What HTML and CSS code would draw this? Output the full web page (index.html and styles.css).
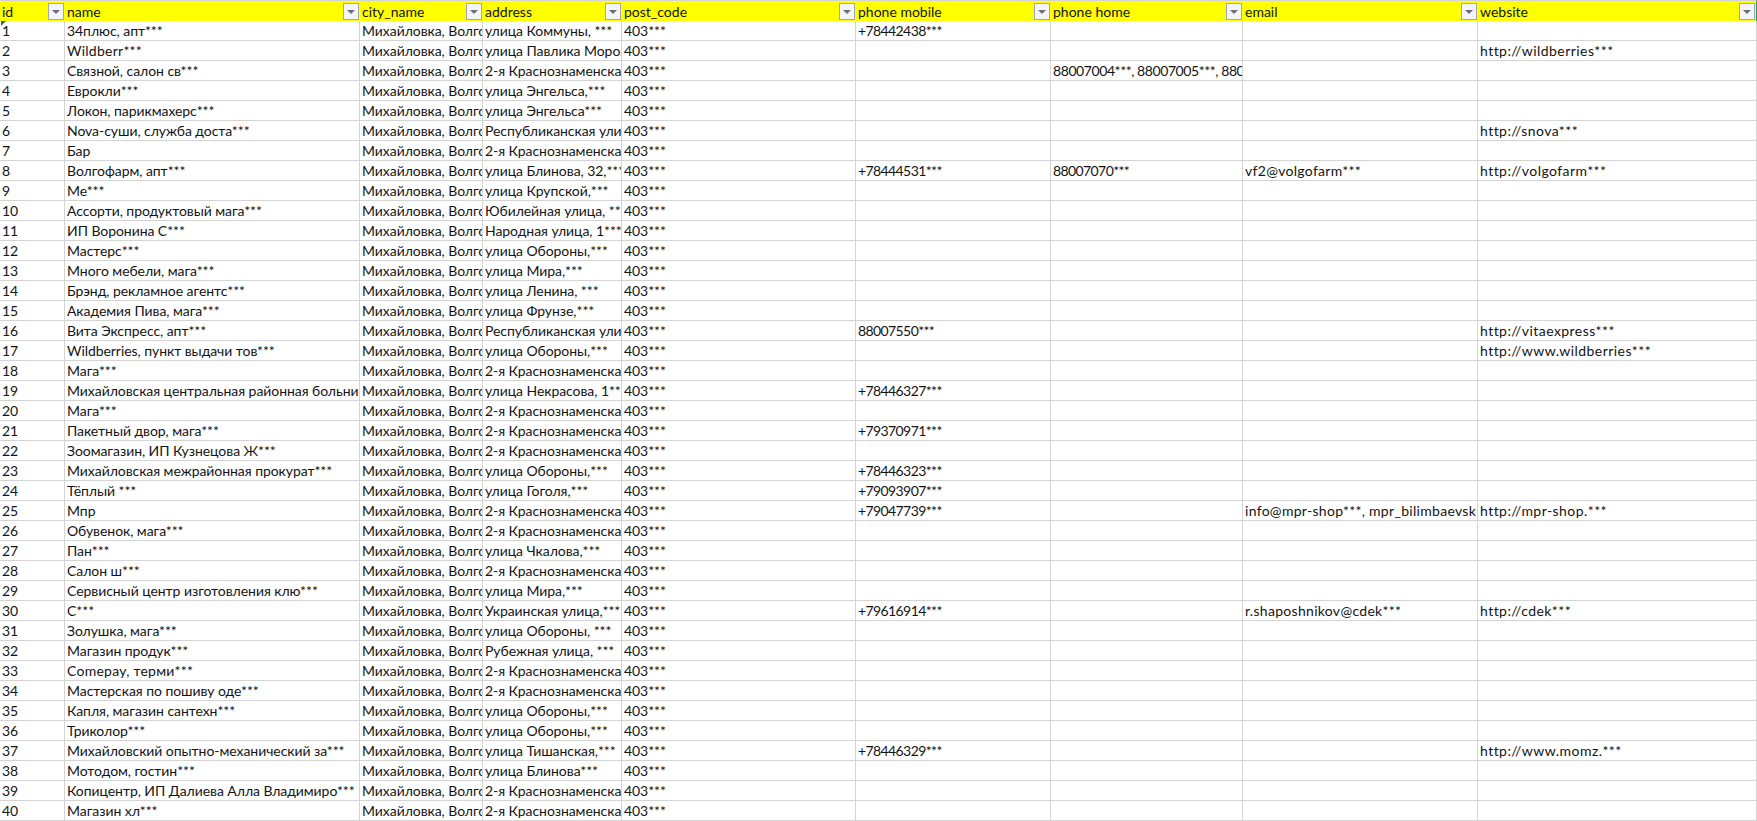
FILE: index.html
```
<!doctype html>
<html lang="ru">
<head>
<meta charset="utf-8">
<title>Таблица</title>
<link rel="stylesheet" href="styles.css">
</head>
<body>
<table class="sheet">
<colgroup><col class="c-id"><col class="c-name"><col class="c-city"><col class="c-addr"><col class="c-post"><col class="c-mob"><col class="c-home"><col class="c-mail"><col class="c-web"></colgroup>
<thead>
<tr>
<th><div class="head"><span class="label">id</span><span class="filter"></span></div></th>
<th><div class="head"><span class="label">name</span><span class="filter"></span></div></th>
<th><div class="head"><span class="label">city_name</span><span class="filter"></span></div></th>
<th><div class="head"><span class="label">address</span><span class="filter"></span></div></th>
<th><div class="head"><span class="label">post_code</span><span class="filter"></span></div></th>
<th><div class="head"><span class="label">phone mobile</span><span class="filter"></span></div></th>
<th><div class="head"><span class="label">phone home</span><span class="filter"></span></div></th>
<th><div class="head"><span class="label">email</span><span class="filter"></span></div></th>
<th class="last"><div class="head"><span class="label">website</span><span class="filter"></span></div></th>
</tr>
</thead>
<tbody>
<tr><td class="flagged">1</td><td>34плюс, апт***</td><td>Михайловка, Волгоградская область</td><td>улица Коммуны, ***</td><td>403***</td><td>+78442438***</td><td></td><td></td><td></td></tr>
<tr><td>2</td><td class="lat">Wildberr***</td><td>Михайловка, Волгоградская область</td><td>улица Павлика Морозова</td><td>403***</td><td></td><td></td><td></td><td>http://wildberries***</td></tr>
<tr><td>3</td><td>Связной, салон св***</td><td>Михайловка, Волгоградская область</td><td>2-я Краснознаменская улица</td><td>403***</td><td></td><td class="wide">88007004***, 88007005***, 880</td><td></td><td></td></tr>
<tr><td>4</td><td>Еврокли***</td><td>Михайловка, Волгоградская область</td><td>улица Энгельса,***</td><td>403***</td><td></td><td></td><td></td><td></td></tr>
<tr><td>5</td><td>Локон, парикмахерс***</td><td>Михайловка, Волгоградская область</td><td>улица Энгельса***</td><td>403***</td><td></td><td></td><td></td><td></td></tr>
<tr><td>6</td><td>Nova-суши, служба доста***</td><td>Михайловка, Волгоградская область</td><td>Республиканская улица</td><td>403***</td><td></td><td></td><td></td><td>http://snova***</td></tr>
<tr><td>7</td><td>Бар</td><td>Михайловка, Волгоградская область</td><td>2-я Краснознаменская улица</td><td>403***</td><td></td><td></td><td></td><td></td></tr>
<tr><td>8</td><td>Волгофарм, апт***</td><td>Михайловка, Волгоградская область</td><td>улица Блинова, 32,***</td><td>403***</td><td>+78444531***</td><td>88007070***</td><td>vf2@volgofarm***</td><td>http://volgofarm***</td></tr>
<tr><td>9</td><td>Ме***</td><td>Михайловка, Волгоградская область</td><td>улица Крупской,***</td><td>403***</td><td></td><td></td><td></td><td></td></tr>
<tr><td>10</td><td>Ассорти, продуктовый мага***</td><td>Михайловка, Волгоградская область</td><td>Юбилейная улица, ***</td><td>403***</td><td></td><td></td><td></td><td></td></tr>
<tr><td>11</td><td>ИП Воронина С***</td><td>Михайловка, Волгоградская область</td><td>Народная улица, 1***</td><td>403***</td><td></td><td></td><td></td><td></td></tr>
<tr><td>12</td><td>Мастерс***</td><td>Михайловка, Волгоградская область</td><td>улица Обороны,***</td><td>403***</td><td></td><td></td><td></td><td></td></tr>
<tr><td>13</td><td>Много мебели, мага***</td><td>Михайловка, Волгоградская область</td><td>улица Мира,***</td><td>403***</td><td></td><td></td><td></td><td></td></tr>
<tr><td>14</td><td>Брэнд, рекламное агентс***</td><td>Михайловка, Волгоградская область</td><td>улица Ленина, ***</td><td>403***</td><td></td><td></td><td></td><td></td></tr>
<tr><td>15</td><td>Академия Пива, мага***</td><td>Михайловка, Волгоградская область</td><td>улица Фрунзе,***</td><td>403***</td><td></td><td></td><td></td><td></td></tr>
<tr><td>16</td><td>Вита Экспресс, апт***</td><td>Михайловка, Волгоградская область</td><td>Республиканская улица</td><td>403***</td><td>88007550***</td><td></td><td></td><td>http://vitaexpress***</td></tr>
<tr><td>17</td><td>Wildberries, пункт выдачи тов***</td><td>Михайловка, Волгоградская область</td><td>улица Обороны,***</td><td>403***</td><td></td><td></td><td></td><td>http://www.wildberries***</td></tr>
<tr><td>18</td><td>Мага***</td><td>Михайловка, Волгоградская область</td><td>2-я Краснознаменская улица</td><td>403***</td><td></td><td></td><td></td><td></td></tr>
<tr><td>19</td><td>Михайловская центральная районная больница***</td><td>Михайловка, Волгоградская область</td><td>улица Некрасова, 1***</td><td>403***</td><td>+78446327***</td><td></td><td></td><td></td></tr>
<tr><td>20</td><td>Мага***</td><td>Михайловка, Волгоградская область</td><td>2-я Краснознаменская улица</td><td>403***</td><td></td><td></td><td></td><td></td></tr>
<tr><td>21</td><td>Пакетный двор, мага***</td><td>Михайловка, Волгоградская область</td><td>2-я Краснознаменская улица</td><td>403***</td><td>+79370971***</td><td></td><td></td><td></td></tr>
<tr><td>22</td><td>Зоомагазин, ИП Кузнецова Ж***</td><td>Михайловка, Волгоградская область</td><td>2-я Краснознаменская улица</td><td>403***</td><td></td><td></td><td></td><td></td></tr>
<tr><td>23</td><td>Михайловская межрайонная прокурат***</td><td>Михайловка, Волгоградская область</td><td>улица Обороны,***</td><td>403***</td><td>+78446323***</td><td></td><td></td><td></td></tr>
<tr><td>24</td><td>Тёплый ***</td><td>Михайловка, Волгоградская область</td><td>улица Гоголя,***</td><td>403***</td><td>+79093907***</td><td></td><td></td><td></td></tr>
<tr><td>25</td><td>Мпр</td><td>Михайловка, Волгоградская область</td><td>2-я Краснознаменская улица</td><td>403***</td><td>+79047739***</td><td></td><td>info@mpr-shop***, mpr_bilimbaevsk***</td><td>http://mpr-shop.***</td></tr>
<tr><td>26</td><td>Обувенок, мага***</td><td>Михайловка, Волгоградская область</td><td>2-я Краснознаменская улица</td><td>403***</td><td></td><td></td><td></td><td></td></tr>
<tr><td>27</td><td>Пан***</td><td>Михайловка, Волгоградская область</td><td>улица Чкалова,***</td><td>403***</td><td></td><td></td><td></td><td></td></tr>
<tr><td>28</td><td>Салон ш***</td><td>Михайловка, Волгоградская область</td><td>2-я Краснознаменская улица</td><td>403***</td><td></td><td></td><td></td><td></td></tr>
<tr><td>29</td><td>Сервисный центр изготовления клю***</td><td>Михайловка, Волгоградская область</td><td>улица Мира,***</td><td>403***</td><td></td><td></td><td></td><td></td></tr>
<tr><td>30</td><td>С***</td><td>Михайловка, Волгоградская область</td><td>Украинская улица,***</td><td>403***</td><td>+79616914***</td><td></td><td>r.shaposhnikov@cdek***</td><td>http://cdek***</td></tr>
<tr><td>31</td><td>Золушка, мага***</td><td>Михайловка, Волгоградская область</td><td>улица Обороны, ***</td><td>403***</td><td></td><td></td><td></td><td></td></tr>
<tr><td>32</td><td>Магазин продук***</td><td>Михайловка, Волгоградская область</td><td>Рубежная улица, ***</td><td>403***</td><td></td><td></td><td></td><td></td></tr>
<tr><td>33</td><td class="lat">Comepay, терми***</td><td>Михайловка, Волгоградская область</td><td>2-я Краснознаменская улица</td><td>403***</td><td></td><td></td><td></td><td></td></tr>
<tr><td>34</td><td>Мастерская по пошиву оде***</td><td>Михайловка, Волгоградская область</td><td>2-я Краснознаменская улица</td><td>403***</td><td></td><td></td><td></td><td></td></tr>
<tr><td>35</td><td>Капля, магазин сантехн***</td><td>Михайловка, Волгоградская область</td><td>улица Обороны,***</td><td>403***</td><td></td><td></td><td></td><td></td></tr>
<tr><td>36</td><td>Триколор***</td><td>Михайловка, Волгоградская область</td><td>улица Обороны,***</td><td>403***</td><td></td><td></td><td></td><td></td></tr>
<tr><td>37</td><td>Михайловский опытно-механический за***</td><td>Михайловка, Волгоградская область</td><td>улица Тишанская,***</td><td>403***</td><td>+78446329***</td><td></td><td></td><td>http://www.momz.***</td></tr>
<tr><td>38</td><td>Мотодом, гостин***</td><td>Михайловка, Волгоградская область</td><td>улица Блинова***</td><td>403***</td><td></td><td></td><td></td><td></td></tr>
<tr><td>39</td><td>Копицентр, ИП Далиева Алла Владимиро***</td><td>Михайловка, Волгоградская область</td><td>2-я Краснознаменская улица</td><td>403***</td><td></td><td></td><td></td><td></td></tr>
<tr><td>40</td><td>Магазин хл***</td><td>Михайловка, Волгоградская область</td><td>2-я Краснознаменская улица</td><td>403***</td><td></td><td></td><td></td><td></td></tr>
</tbody>
</table>
</body>
</html>
```
FILE: styles.css
```
html, body {
  margin: 0;
  padding: 0;
  background: #fff;
  overflow: hidden;
}

.sheet {
  table-layout: fixed;
  border-collapse: separate;
  border-spacing: 0;
  width: 1757px;
  font-family: Lato, "Noto Sans", sans-serif;
  font-size: 14px;
  color: #141414;
}

.c-id { width: 65px; }
.c-name { width: 295px; }
.c-city { width: 123px; }
.c-addr { width: 139px; }
.c-post { width: 234px; }
.c-mob { width: 195px; }
.c-home { width: 192px; }
.c-mail { width: 235px; }
.c-web { width: 279px; }

.sheet th {
  height: 20px;
  padding: 0;
  background: #ffff00;
  border-top: 1px solid #d4d4d4;
  font-weight: 400;
  text-align: left;
}

.sheet th.last {
  border-right: 1px solid #21a366;
}

.head {
  display: flex;
  align-items: center;
  justify-content: space-between;
  height: 20px;
  padding: 0 1px 0 2px;
}

.label {
  white-space: nowrap;
  overflow: hidden;
}

.filter {
  position: relative;
  flex: none;
  width: 14px;
  height: 15px;
  border: 1px solid #a3a7b2;
  background: #f4f5fa;
}

.filter::after {
  content: "";
  position: absolute;
  left: 3px;
  top: 6px;
  border-style: solid;
  border-width: 4px 4px 0;
  border-color: #6e6e6e transparent transparent;
}

.sheet td {
  height: 19px;
  padding: 0 0 0 2px;
  border-right: 1px solid #d4d4d4;
  border-bottom: 1px solid #d4d4d4;
  white-space: nowrap;
  overflow: hidden;
  line-height: 19px;
  box-sizing: content-box;
  letter-spacing: -0.06px;
}

/* Widths of the phone, e-mail and URL columns, which Lato sets differently from the original font */
.sheet td:nth-child(6),
.sheet td:nth-child(7) {
  letter-spacing: -0.6px;
}

.sheet td:nth-child(8) {
  letter-spacing: 0.3px;
}

.sheet td:nth-child(9) {
  letter-spacing: 0.45px;
}

.sheet td.lat {
  letter-spacing: 0.25px;
}

.sheet td.wide {
  letter-spacing: -0.42px;
}

.sheet td.flagged {
  position: relative;
}

.sheet td.flagged::before {
  content: "";
  position: absolute;
  left: 1px;
  top: 0;
  border-style: solid;
  border-width: 5px 5px 0 0;
  border-color: #1f7a2e transparent transparent transparent;
}
```
